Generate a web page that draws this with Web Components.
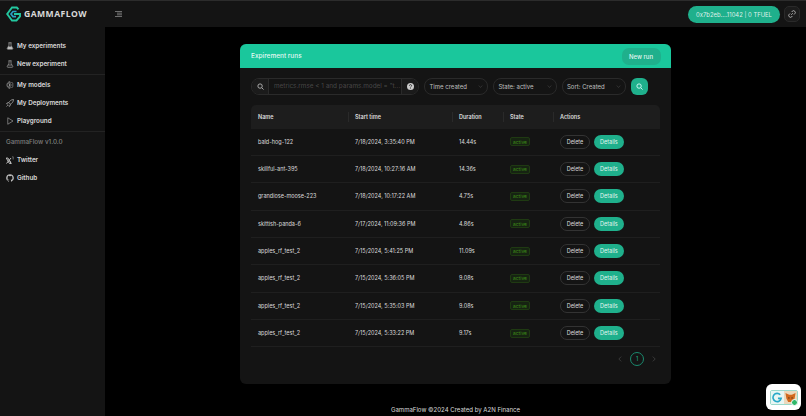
<!DOCTYPE html>
<html>
<head>
<meta charset="utf-8">
<title>GammaFlow</title>
<style>
  html, body { margin: 0; height: 100%; background: #000; overflow: hidden; }
  body { font-family: Inter, "Liberation Sans", sans-serif; color: rgba(255,255,255,.85); }
</style>
</head>
<body>
<gf-app>
  <gf-sidebar slot="side">
    <gf-nav-item icon="flask-solid">My experiments</gf-nav-item>
    <gf-nav-item icon="flask">New experiment</gf-nav-item>
    <gf-divider></gf-divider>
    <gf-nav-item icon="models">My models</gf-nav-item>
    <gf-nav-item icon="rocket">My Deployments</gf-nav-item>
    <gf-nav-item icon="play">Playground</gf-nav-item>
    <gf-divider></gf-divider>
    <gf-nav-item muted>GammaFlow v1.0.0</gf-nav-item>
    <gf-nav-item icon="x">Twitter</gf-nav-item>
    <gf-nav-item icon="github">Github</gf-nav-item>
  </gf-sidebar>
  <gf-runs-card slot="main">
    <gf-run-row name="bald-hog-122" start="7/18/2024, 3:35:40 PM" duration="14.44s"></gf-run-row>
    <gf-run-row name="skillful-ant-395" start="7/18/2024, 10:27:16 AM" duration="14.36s"></gf-run-row>
    <gf-run-row name="grandiose-moose-223" start="7/18/2024, 10:17:22 AM" duration="4.75s"></gf-run-row>
    <gf-run-row name="skittish-panda-6" start="7/17/2024, 11:09:36 PM" duration="4.86s"></gf-run-row>
    <gf-run-row name="apples_rf_test_2" start="7/15/2024, 5:41:25 PM" duration="11.09s"></gf-run-row>
    <gf-run-row name="apples_rf_test_2" start="7/15/2024, 5:36:05 PM" duration="9.08s"></gf-run-row>
    <gf-run-row name="apples_rf_test_2" start="7/15/2024, 5:35:03 PM" duration="9.08s"></gf-run-row>
    <gf-run-row name="apples_rf_test_2" start="7/15/2024, 5:33:22 PM" duration="9.17s"></gf-run-row>
  </gf-runs-card>
</gf-app>

<script>
const ICONS = {
  'flask-solid': '<path d="M5 1.500h6M6 1.500v5L2.500 13a1 1 0 0 0 .9 1.500h9.200a1 1 0 0 0 .9-1.500L10 6.500v-5" fill="none" stroke="currentColor" stroke-width="1.300"/><path d="M4.600 9h6.800l2 5H2.600z" fill="currentColor"/>',
  'flask': '<path d="M5 1.500h6M6 1.500v5L2.500 13a1 1 0 0 0 .9 1.500h9.200a1 1 0 0 0 .9-1.500L10 6.500v-5M4.600 10h6.800" fill="none" stroke="currentColor" stroke-width="1.200"/>',
  'models': '<path d="M8 1.500c-3.500 0-6 3-6 6.500s2.500 6.500 6 6.500M8 1.500v13M4.500 5 8 7.500M4.500 11 8 8.500M11 2l3 3.500M10.500 8H15M11 14l3-3.500" fill="none" stroke="currentColor" stroke-width="1.300"/>',
  'rocket': '<path d="M15 1c-4.500.2-7.300 2.400-9.300 6.300L8.700 10.300C12.600 8.300 14.800 5.500 15 1zM5.700 7.300H3L1 9.500l3.200.6M8.700 10.300V13l-2.200 2-.6-3.200M3.800 12.200 1 15" fill="none" stroke="currentColor" stroke-width="1.300"/>',
  'play': '<path d="M3.500 1.500v13L14 8z" fill="none" stroke="currentColor" stroke-width="1.100" stroke-linejoin="round"/>',
  'x': '<path d="M.5 4h3.300l6.400 11H6.900zM10 4 1 15M7.200 9 10.500 15" fill="none" stroke="currentColor" stroke-width="2"/><path d="M12.700 1.500H14.300V7" fill="none" stroke="currentColor" stroke-width="1.100"/>',
  'github': '<path fill="currentColor" d="M8 .5a7.700 7.700 0 0 0-2.430 15c.38.07.52-.17.52-.37v-1.300c-2.140.46-2.590-1.030-2.590-1.030-.35-.89-.85-1.130-.85-1.130-.7-.48.05-.47.05-.47.77.05 1.180.79 1.180.79.69 1.170 1.800.83 2.240.64.07-.5.27-.84.49-1.030-1.710-.19-3.500-.85-3.500-3.800 0-.84.3-1.530.79-2.070-.08-.19-.34-.97.07-2.030 0 0 .65-.21 2.120.79a7.400 7.400 0 0 1 3.860 0c1.470-1 2.120-.79 2.120-.79.42 1.060.16 1.840.08 2.030.49.54.79 1.230.79 2.070 0 2.960-1.800 3.610-3.520 3.800.28.24.53.71.53 1.430v2.070c0 .2.14.45.53.37A7.700 7.700 0 0 0 8 .5z"/>'
};

// shared helper, every element has the same boilerplate
function shadow(el, html) {
  const root = el.attachShadow({ mode: 'open' });
  root.innerHTML = html;
  return root;
}

class GfApp extends HTMLElement {
  constructor() {
    super();
    shadow(this, `
    <style>
      :host { display: grid; grid-template-columns: 105px 1fr; grid-template-rows: 27px 1fr; height: 416px; background: #000; }
      gf-header { grid-column: 1 / 3; }
      .body { display: flex; flex-direction: column; min-width: 0; }
      .center { flex: 1; display: flex; justify-content: center; align-items: flex-start; padding-top: 17px; }
      footer { height: 14px; text-align: center; font-size: 6.05px; line-height: 16px; color: rgba(255,255,255,.85); }
    </style>
    <gf-header></gf-header>
    <slot name="side"></slot>
    <div class="body">
      <div class="center"><slot name="main"></slot></div>
      <footer>GammaFlow ©2024 Created by A2N Finance</footer>
    </div>
    <gf-wallet-chip></gf-wallet-chip>`);
  }
}

class GfHeader extends HTMLElement {
  constructor() {
    super();
    shadow(this, `
    <style>
      :host { display: flex; align-items: center; background: #141414; height: 27px; box-sizing: border-box; padding: 0 6.5px 0 6px; border-top: 1px solid #2c2c2c; }
      .brand { display: flex; align-items: center; gap: 3px; width: 102px; }
      svg.logo { width: 15px; height: 16px; flex: none; }
      .word { font: 700 8.6px "Open Sans", "Liberation Sans", sans-serif; letter-spacing: .45px; color: #d9d9d9; }
      .menu { color: #8c8c8c; width: 7px; height: 6px; margin-left: 7px; }
      .right { margin-left: auto; display: flex; align-items: center; gap: 4px; }
      .wallet { background: #1fb08c; color: rgba(255,255,255,.85); font-size: 5.9px; height: 17px; line-height: 17px; border-radius: 8.5px; width: 92px; text-align: center; white-space: nowrap; }
      .link { width: 15.5px; height: 16.5px; border-radius: 5px; background: #1c1c1c; border: 1px solid #2a2a2a; box-sizing: border-box; display: flex; align-items: center; justify-content: center; color: #bbb; }
      .link svg { width: 8px; height: 8px; }
    </style>
    <div class="brand">
      <svg class="logo" viewBox="0 0 15 16" fill="none">
        <path d="M12.500 3.400 10.800 1.500H6L1.200 8 6 14.500h4.500L14 10.500V8H8" stroke="#23c8a0" stroke-width="1.900"/>
        <path d="M10.500 5.500H7L5 8l2 2.600h3" stroke="#2a9fc4" stroke-width="1.700"/>
      </svg>
      <span class="word">GAMMAFLOW</span>
    </div>
    <svg class="menu" viewBox="0 0 14 12"><path d="M0 1h14M4 4.300h10M4 7.600h10M0 11h14" stroke="currentColor" stroke-width="1.500"/></svg>
    <div class="right">
      <div class="wallet">0x7b2eb....11042 | 0 TFUEL</div>
      <div class="link"><svg viewBox="0 0 16 16" fill="none" stroke="currentColor" stroke-width="1.800"><path d="M6.500 9.500 9.500 6.500M7 4l1.500-1.500a3 3 0 0 1 5 5L12 9M9 12l-1.500 1.500a3 3 0 0 1-5-5L4 7"/></svg></div>
    </div>`);
  }
}

class GfSidebar extends HTMLElement {
  constructor() {
    super();
    shadow(this, `
    <style>
      :host { display: block; background: #141414; padding-top: 10px; box-sizing: border-box; }
    </style>
    <slot></slot>`);
  }
}

class GfDivider extends HTMLElement {
  constructor() {
    super();
    shadow(this, `<style>:host { display: block; height: 1px; background: #232323; margin: .5px 0; }</style>`);
  }
}

class GfNavItem extends HTMLElement {
  constructor() {
    super();
    const icon = ICONS[this.getAttribute('icon')] || '';
    shadow(this, `
    <style>
      :host { display: flex; align-items: center; height: 18.3px; padding-left: 6px; gap: 3px; font-size: 6.3px; font-weight: 600; color: rgba(255,255,255,.85); }
      :host([muted]) { color: rgba(255,255,255,.45); font-weight: 500; }
      svg { width: 8px; height: 8px; color: #bdbdbd; flex: none; }
    </style>
    ${icon ? `<svg viewBox="0 0 16 16">${icon}</svg>` : ''}
    <slot></slot>`);
  }
}

class GfSelect extends HTMLElement {
  constructor() {
    super();
    shadow(this, `
    <style>
      :host { display: flex; align-items: center; box-sizing: border-box; height: 17px; border: 1px solid #2a2a2a; border-radius: 8px; padding: 0 4.5px; font-size: 6px; color: rgba(255,255,255,.72); white-space: nowrap; }
      .label { flex: 1; }
      svg { width: 5px; height: 5px; color: #444; }
    </style>
    <span class="label"><slot></slot></span>
    <svg viewBox="0 0 10 10" fill="none"><path d="M1.500 3 5 7l3.500-4" stroke="currentColor" stroke-width="1.200"/></svg>`);
  }
}

class GfRunRow extends HTMLElement {
  constructor() {
    super();
    shadow(this, `
    <style>
      :host { display: grid; grid-template-columns: var(--cols); height: 27.35px; align-items: center; border-bottom: 1px solid #1f1f1f; box-sizing: border-box; font-size: 5.5px; color: rgba(255,255,255,.85); }
      div { padding-left: 7px; white-space: nowrap; }
      .tag { display: inline-flex; align-items: center; justify-content: center; width: 20px; height: 9px; box-sizing: border-box; font-size: 4.9px; border: 1px solid #1f3a12; background: #162312; color: #3f8f18; border-radius: 2px; }
      .actions { display: flex; gap: 3.7px; align-items: center; }
      button { font: inherit; height: 14px; border-radius: 7px; box-sizing: border-box; cursor: pointer; padding: 0; }
      .del { width: 30px; background: transparent; border: 1px solid #333; color: rgba(255,255,255,.85); }
      .det { width: 30.5px; background: #1fb08c; border: 0; color: rgba(255,255,255,.9); }
    </style>
    <div>${this.getAttribute('name')}</div>
    <div>${this.getAttribute('start')}</div>
    <div>${this.getAttribute('duration')}</div>
    <div><span class="tag">active</span></div>
    <div class="actions"><button class="del">Delete</button><button class="det">Details</button></div>`);
  }
}

class GfPagination extends HTMLElement {
  constructor() {
    super();
    shadow(this, `
    <style>
      :host { display: flex; justify-content: flex-end; align-items: center; gap: 8px; font-size: 5.5px; color: #444; padding-right: 4px; }
      .cur { width: 14px; height: 14px; box-sizing: border-box; border: 1px solid #1a8a6e; border-radius: 50%; display: flex; align-items: center; justify-content: center; color: #1fb08c; }
      svg { width: 4px; height: 6px; }
    </style>
    <svg viewBox="0 0 6 10" fill="none"><path d="M5 1 1 5l4 4" stroke="currentColor" stroke-width="1.300"/></svg>
    <span class="cur">1</span>
    <svg viewBox="0 0 6 10" fill="none"><path d="M1 1l4 4-4 4" stroke="currentColor" stroke-width="1.300"/></svg>`);
  }
}

class GfRunsCard extends HTMLElement {
  constructor() {
    super();
    shadow(this, `
    <style>
      :host { display: block; width: 431px; height: 340px; box-sizing: border-box; background: #141414; border-radius: 6px; overflow: hidden; --cols: 97px 104px 51px 50px 1fr; }
      .top { background: #1ac79c; height: 24px; display: flex; align-items: center; justify-content: space-between; padding: 0 10.5px 0 11px; font-size: 6.5px; font-weight: 500; color: rgba(255,255,255,.9); }
      .new { background: #1fb08c; width: 39px; height: 17px; line-height: 17px; text-align: center; border-radius: 7px; font-size: 6px; }
      .content { padding: 10px 11px 0; }
      .filters { display: flex; align-items: center; height: 17px; margin-bottom: 10px; }
      .search { display: flex; align-items: stretch; width: 168px; height: 17px; box-sizing: border-box; border: 1px solid #2a2a2a; border-radius: 8px; overflow: hidden; font-size: 6.4px; }
      .search .pre { width: 16px; flex: none; display: flex; align-items: center; justify-content: center; background: #1b1b1b; color: #bbb; border-right: 1px solid #2a2a2a; }
      .search .txt { flex: 1; min-width: 0; line-height: 15px; padding-left: 5px; color: rgba(255,255,255,.22); white-space: nowrap; }
      .search .suf { width: 16px; flex: none; display: flex; align-items: center; justify-content: center; background: #1b1b1b; color: #ccc; border-left: 1px solid #2a2a2a; }
      .search svg { width: 7px; height: 7px; }
      gf-select.a { width: 64px; margin-left: 5px; }
      gf-select.b { width: 64px; margin-left: 5px; }
      gf-select.c { width: 64.5px; margin-left: 4.5px; }
      .go { width: 17px; height: 17px; border-radius: 6px; background: #1fb08c; margin-left: 5px; display: flex; align-items: center; justify-content: center; color: #dff; }
      .go svg { width: 7px; height: 7px; }
      .head { display: grid; grid-template-columns: var(--cols); height: 23.5px; align-items: center; background: #1d1d1d; border-radius: 5px 5px 0 0; font-size: 5.5px; font-weight: 600; color: rgba(255,255,255,.85); }
      .head div { padding-left: 7px; position: relative; }
      .head div + div::before { content: ""; position: absolute; left: 0; top: -2px; bottom: -2px; width: 1px; background: #2a2a2a; }
      gf-pagination { margin-top: 5px; }
    </style>
    <div class="top"><span>Expirement runs</span><span class="new">New run</span></div>
    <div class="content">
      <div class="filters">
        <div class="search">
          <span class="pre"><svg viewBox="0 0 16 16" fill="none" stroke="currentColor" stroke-width="2"><circle cx="7" cy="7" r="5"/><path d="m11 11 4 4"/></svg></span>
          <span class="txt">metrics.rmse &lt; 1 and params.model = "t...</span>
          <span class="suf"><svg viewBox="0 0 16 16"><circle cx="8" cy="8" r="8" fill="currentColor"/><path d="M5.500 6.200a2.500 2.500 0 1 1 3.600 2.200c-.7.4-1.100.7-1.100 1.500M8 11.200v1.500" fill="none" stroke="#141414" stroke-width="1.700"/></svg></span>
        </div>
        <gf-select class="a">Time created</gf-select>
        <gf-select class="b">State: active</gf-select>
        <gf-select class="c">Sort: Created</gf-select>
        <span class="go"><svg viewBox="0 0 16 16" fill="none" stroke="currentColor" stroke-width="2"><circle cx="7" cy="7" r="5"/><path d="m11 11 4 4"/></svg></span>
      </div>
      <div class="head"><div>Name</div><div>Start time</div><div>Duration</div><div>State</div><div>Actions</div></div>
      <slot></slot>
      <gf-pagination></gf-pagination>
    </div>`);
  }
}

class GfWalletChip extends HTMLElement {
  constructor() {
    super();
    shadow(this, `
    <style>
      :host { position: fixed; right: 5px; bottom: 6px; width: 35px; height: 26px; background: #fff; border-radius: 6px; display: flex; align-items: center; justify-content: center; }
      .inner { display: flex; width: 28px; height: 15px; border: 1px solid #9ad9cb; border-radius: 2px; box-sizing: border-box; position: relative; }
      .l { flex: 1; display: flex; align-items: center; justify-content: center; background: #e8f6f3; }
      .r { flex: 1; background: #ecd9bd; display: flex; align-items: center; justify-content: center; }
      .l svg, .r svg { width: 11px; height: 11px; }
      .ok { position: absolute; right: -1.500px; bottom: -2.500px; width: 7px; height: 7px; border-radius: 50%; background: #2fb86a; border: 1px solid #fff; box-sizing: border-box; }
    </style>
    <div class="inner">
      <span class="l"><svg viewBox="0 0 24 24" fill="none"><path d="M18 6a9 9 0 1 0 2 8h-7" stroke="#27a9c9" stroke-width="3.500"/></svg></span>
      <span class="r"><svg viewBox="0 0 12 12"><path d="M.5 1l4 2h3l4-2-1 6-2 4H3.500l-2-4z" fill="#d2691e"/><path d="M3.500 6.500h1.500M7 6.500h1.500" stroke="#3a2a1a" stroke-width="1"/></svg></span>
      <span class="ok"></span>
    </div>`);
  }
}

customElements.define('gf-app', GfApp);
customElements.define('gf-header', GfHeader);
customElements.define('gf-sidebar', GfSidebar);
customElements.define('gf-divider', GfDivider);
customElements.define('gf-nav-item', GfNavItem);
customElements.define('gf-select', GfSelect);
customElements.define('gf-run-row', GfRunRow);
customElements.define('gf-pagination', GfPagination);
customElements.define('gf-runs-card', GfRunsCard);
customElements.define('gf-wallet-chip', GfWalletChip);
</script>
</body>
</html>
